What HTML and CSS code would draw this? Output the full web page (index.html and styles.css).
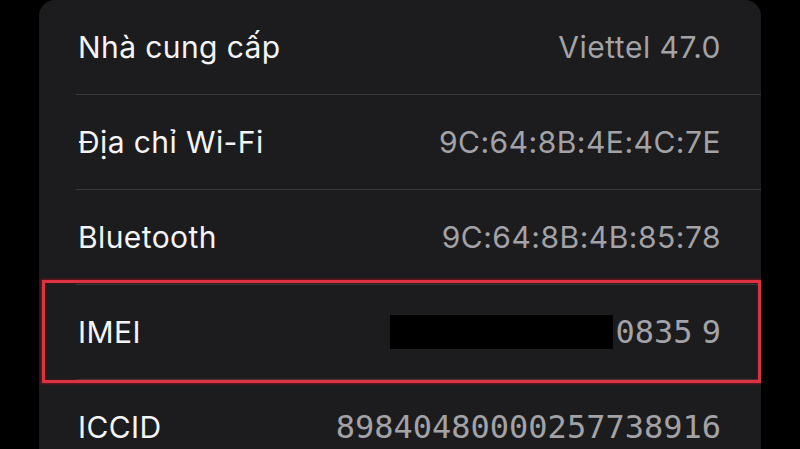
FILE: index.html
```html
<html>

<head>
    <link rel="stylesheet" href="styles.css">
</head>

<body>
    <div class="card">
        <div class="row">
            <span class="label">Nhà cung cấp</span>
            <span class="value">Viettel 47.0</span>
        </div>
        <div class="row">
            <span class="label">Địa chỉ Wi-Fi</span>
            <span class="value">9C:64:8B:4E:4C:7E</span>
        </div>
        <div class="row">
            <span class="label">Bluetooth</span>
            <span class="value">9C:64:8B:4B:85:78</span>
        </div>
        <div class="row marked">
            <span class="label">IMEI</span>
            <span class="value mono imei"><span class="hidden"></span>0835 9</span>
            <div class="highlight"></div>
        </div>
        <div class="row">
            <span class="label">ICCID</span>
            <span class="value mono">89840480000257738916</span>
        </div>
    </div>
</body>

</html>
```

FILE: styles.css
```css
body {
    margin: 0;
    background: #000;
    height: 449px;
    overflow: hidden;
    font-family: 'Inter', 'Noto Sans', sans-serif;
}
.card {
    margin: 0 39px;
    padding-left: 37px;
    background: #1c1c1e;
    border-radius: 16px 16px 0 0;
    height: 449px;
    overflow: hidden;
}
.row {
    display: flex;
    align-items: center;
    justify-content: space-between;
    height: 94px;
    padding-right: 40px;
    border-bottom: 1px solid #38383a;
}
.label {
    color: #f4f4f6;
    font-size: 30px;
    letter-spacing: 0.4px;
    padding-left: 2px;
}
.value {
    color: #a2a2a7;
    font-size: 30px;
    letter-spacing: 0.5px;
    display: flex;
    align-items: center;
}
.mono {
    font-family: 'DejaVu Sans Mono', monospace;
    font-size: 32px;
    letter-spacing: 0;
}
.imei {
    word-spacing: -10px;
    white-space: pre;
}
.hidden {
    display: inline-block;
    width: 223px;
    height: 34px;
    background: #000;
    margin-right: 2px;
}
.marked {
    position: relative;
}
.highlight {
    position: absolute;
    top: -5px;
    bottom: -4px;
    left: -34px;
    right: 0;
    border: 3px solid #dc3242;
    box-shadow: 0 0 2px 1px rgba(150, 20, 35, 0.7), inset 0 0 2px rgba(150, 20, 35, 0.7);
}
```
